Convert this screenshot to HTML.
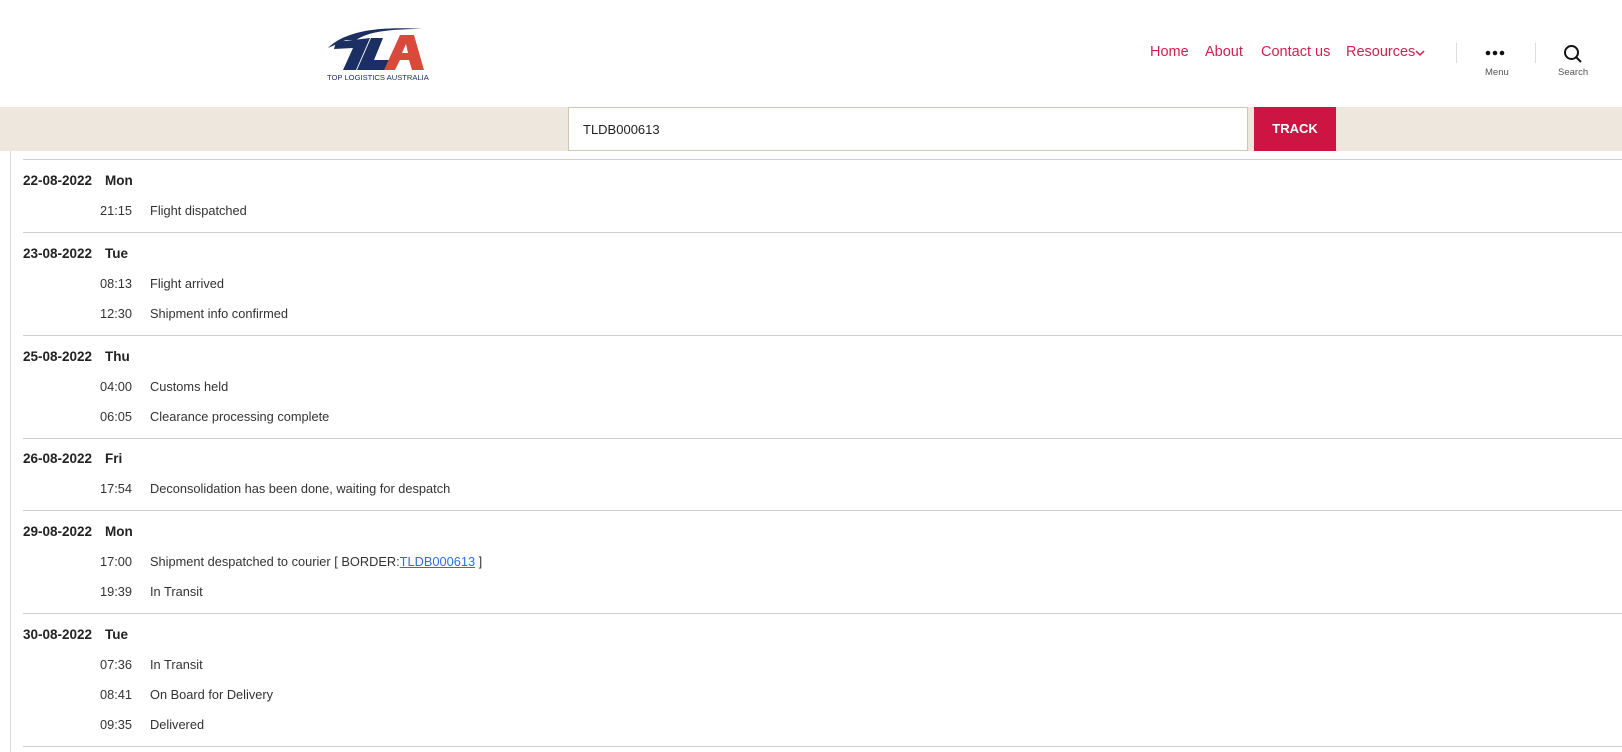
<!DOCTYPE html>
<html><head><meta charset="utf-8"><style>
*{margin:0;padding:0;box-sizing:border-box}
body{width:1622px;height:752px;overflow:hidden;background:#fff;font-family:"Liberation Sans",sans-serif;position:relative}
.a{position:absolute;white-space:nowrap}
.nav{font-size:14.5px;color:#cd2150;top:44px}
.lbl{font-size:9.5px;color:#555;top:67px}
.sep{position:absolute;left:23px;right:0;height:1px;background:#cfcfcf}
.d{font-size:13.5px;font-weight:bold;color:#222;left:23px}
.dw{font-size:13.5px;font-weight:bold;color:#222;left:105px}
.t{font-size:12.8px;color:#333;width:60px;text-align:right;left:72px}
.e{font-size:12.8px;color:#333;left:150px}
</style></head><body>
<svg class="a" style="left:326px;top:24px" width="110" height="62" viewBox="0 0 110 62">
<path d="M2 24 C18 8 50 2 96 5 C62 5 42 8 30 16 L20 16 Z" fill="#1b2f63"/>
<path d="M10 18 L44 14 L30 46 L17 46 L27 24 L8 25 Z" fill="#1b2f63"/>
<path d="M45 14 L57 14 L48 36 L64 36 L59 46 L31 46 Z" fill="#1b2f63"/>
<path d="M74 11 L88 11 L98 46 L86 46 L83 36 L74 36 L69 46 L58 46 Z M76 29 L82 29 L80 20 Z" fill="#d94a3d" fill-rule="evenodd"/>
<text x="1" y="56" font-family="Liberation Sans" font-size="7.6" fill="#1b2f63">TOP LOGISTICS AUSTRALIA</text>
</svg>
<div class="a nav" style="left:1150px">Home</div>
<div class="a nav" style="left:1205px">About</div>
<div class="a nav" style="left:1261px">Contact us</div>
<div class="a nav" style="left:1346px">Resources</div>
<svg class="a" style="left:1415px;top:49px" width="10" height="8"><path d="M1 2 L5 6 L9 2" stroke="#cd2150" stroke-width="1.5" fill="none"/></svg>
<div class="a" style="left:1456px;top:43px;width:1px;height:20px;background:#ddd"></div>
<div class="a" style="left:1535px;top:43px;width:1px;height:20px;background:#ddd"></div>
<svg class="a" style="left:1484px;top:49px" width="22" height="8"><circle cx="4" cy="4" r="2.3" fill="#111"/><circle cx="11" cy="4" r="2.3" fill="#111"/><circle cx="18" cy="4" r="2.3" fill="#111"/></svg>
<div class="a lbl" style="left:1485px">Menu</div>
<svg class="a" style="left:1563px;top:44px" width="20" height="20"><circle cx="8.5" cy="8.5" r="6.5" stroke="#111" stroke-width="2" fill="none"/><path d="M13 13 L18 18" stroke="#111" stroke-width="2"/></svg>
<div class="a lbl" style="left:1558px">Search</div>
<div class="a" style="left:0;top:107px;width:1622px;height:44px;background:#ede7dd"></div>
<div class="a" style="left:568px;top:107px;width:680px;height:44px;background:#fff;border:1px solid #cfc6b4"></div>
<div class="a" style="left:583px;top:122px;font-size:13px;color:#222">TLDB000613</div>
<div class="a" style="left:1254px;top:107px;width:82px;height:44px;background:#cd1543;color:#fff;font-weight:bold;font-size:13px;text-align:center;line-height:44px">TRACK</div>
<div class="a" style="left:10px;top:151px;width:1px;height:601px;background:#ddd"></div>
<div class="sep" style="top:159px"></div>
<div class="a d" style="top:173px">22-08-2022</div><div class="a dw" style="top:173px">Mon</div>
<div class="a t" style="top:203px">21:15</div><div class="a e" style="top:203px">Flight dispatched</div>
<div class="sep" style="top:232px"></div>
<div class="a d" style="top:246px">23-08-2022</div><div class="a dw" style="top:246px">Tue</div>
<div class="a t" style="top:276px">08:13</div><div class="a e" style="top:276px">Flight arrived</div>
<div class="a t" style="top:306px">12:30</div><div class="a e" style="top:306px">Shipment info confirmed</div>
<div class="sep" style="top:335px"></div>
<div class="a d" style="top:349px">25-08-2022</div><div class="a dw" style="top:349px">Thu</div>
<div class="a t" style="top:379px">04:00</div><div class="a e" style="top:379px">Customs held</div>
<div class="a t" style="top:409px">06:05</div><div class="a e" style="top:409px">Clearance processing complete</div>
<div class="sep" style="top:438px"></div>
<div class="a d" style="top:451px">26-08-2022</div><div class="a dw" style="top:451px">Fri</div>
<div class="a t" style="top:481px">17:54</div><div class="a e" style="top:481px">Deconsolidation has been done, waiting for despatch</div>
<div class="sep" style="top:510px"></div>
<div class="a d" style="top:524px">29-08-2022</div><div class="a dw" style="top:524px">Mon</div>
<div class="a t" style="top:554px">17:00</div><div class="a e" style="top:554px">Shipment despatched to courier [ BORDER:<span style="color:#2a6fe0;text-decoration:underline">TLDB000613</span> ]</div>
<div class="a t" style="top:584px">19:39</div><div class="a e" style="top:584px">In Transit</div>
<div class="sep" style="top:613px"></div>
<div class="a d" style="top:627px">30-08-2022</div><div class="a dw" style="top:627px">Tue</div>
<div class="a t" style="top:657px">07:36</div><div class="a e" style="top:657px">In Transit</div>
<div class="a t" style="top:687px">08:41</div><div class="a e" style="top:687px">On Board for Delivery</div>
<div class="a t" style="top:717px">09:35</div><div class="a e" style="top:717px">Delivered</div>
<div class="sep" style="top:746px"></div>
</body></html>
